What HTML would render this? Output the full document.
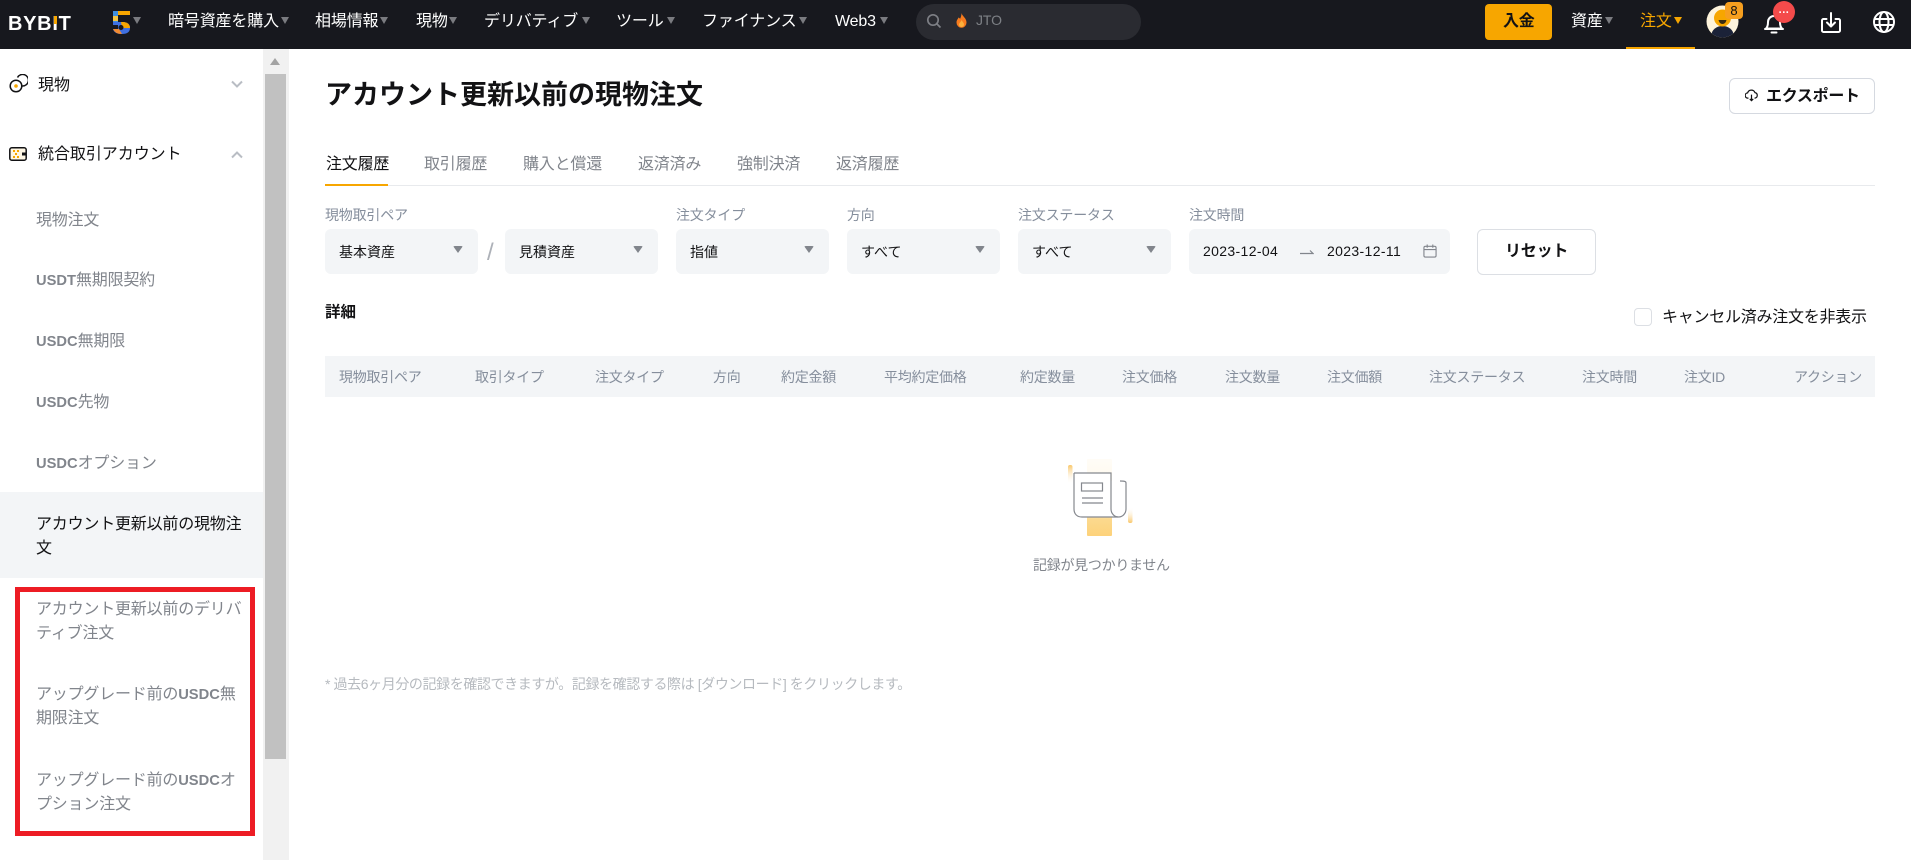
<!DOCTYPE html>
<html lang="ja"><head><meta charset="utf-8"><title>現物注文</title>
<style>
html,body{margin:0;padding:0;background:#fff}
body{width:1911px;height:860px;position:relative;overflow:hidden;font-family:"Liberation Sans","Noto Sans CJK JP",sans-serif;font-size:14px;color:#121214}
.a,.t{position:absolute}
.t{white-space:nowrap;line-height:24px}
#hd{position:absolute;left:0;top:0;width:1911px;height:49px;background:#17181e}
.n{color:#fff;font-size:16px;top:10px;letter-spacing:-.15px}
.c{position:absolute;width:0;height:0;border-left:4.5px solid transparent;border-right:4.5px solid transparent;border-top:7px solid #7a7b80;top:17px}
.s{color:#81858c;font-size:16px;left:36px;width:212px;white-space:normal;letter-spacing:-.2px}
.u{font-weight:700;font-size:14.7px;letter-spacing:0}
.l{color:#858e9c;font-size:14px;top:203px;letter-spacing:-.2px}
.f{position:absolute;top:229px;height:45px;background:#f3f5f7;border-radius:6px}
.v{font-size:14px;top:240px;color:#121214}
.d{position:absolute;top:246px;width:0;height:0;border-left:5px solid transparent;border-right:5px solid transparent;border-top:7px solid #81858c;border-radius:2px}
.h{color:#858e9c;font-size:14px;top:365px;letter-spacing:-.25px}
.b{font-weight:700}
</style></head><body>
<div id="hd"></div>

<div class="t" style="left:8px;top:12px;color:#fff;font-size:20px;font-weight:700;letter-spacing:.7px">BYB<span style="position:relative">I<span class="a" style="left:1.500px;top:3px;width:3px;height:8px;background:#f7a600"></span></span>T</div>

<svg class="a" style="left:113px;top:11px" width="18" height="23" viewBox="0 0 18 23">
<rect x="0" y="0" width="5" height="12" fill="#3f8fe0"/><rect x="5" y="0" width="12" height="4" fill="#f7a600"/><rect x="0" y="5" width="5" height="5" fill="#f4c542"/>
<rect x="5" y="4" width="4" height="4" fill="#17181e"/>
<path d="M0 11 H11 Q17 12 17 17 Q17 23 9 23 Q1 23 0 18 H5 V14 H0Z" fill="#3f6fe0"/>
<path d="M8 11 H11 Q17 12 17 17 H9Z" fill="#f7a600"/><path d="M0 18 H6 L9 23 Q2 23 0 18Z" fill="#f28a30"/><circle cx="8" cy="16.500" r="2.500" fill="#17181e"/>
</svg>
<div class="c" style="left:133px"></div>
<div class="t n" style="left:168px">暗号資産を購入</div><div class="c" style="left:281px"></div>
<div class="t n" style="left:315px">相場情報</div><div class="c" style="left:380px"></div>
<div class="t n" style="left:416px">現物</div><div class="c" style="left:449px"></div>
<div class="t n" style="left:484px">デリバティブ</div><div class="c" style="left:582px"></div>
<div class="t n" style="left:616px">ツール</div><div class="c" style="left:667px"></div>
<div class="t n" style="left:702px">ファイナンス</div><div class="c" style="left:799px"></div>
<div class="t n" style="left:835px">Web3</div><div class="c" style="left:880px"></div>

<div class="a" style="left:916px;top:4px;width:225px;height:36px;border-radius:18px;background:#2a2b31"></div>
<svg class="a" style="left:926px;top:13px" width="16" height="16" viewBox="0 0 16 16" fill="none" stroke="#7d7f85" stroke-width="1.700"><circle cx="7" cy="7" r="5.200"/><path d="M11 11l3.500 3.500"/></svg>
<svg class="a" style="left:956px;top:13px" width="11" height="15" viewBox="0 0 11 15"><path d="M5.500 0C6 3 10.500 5 10.500 9.500A5 5.300 0 0 1 .5 9.500C.5 7 2 6 2.500 4.500 3.500 5 4 5.500 4 6 5 4 5.500 2 5.500 0Z" fill="#f77b1e"/><path d="M5.500 7c.5 1.500 2.500 2.500 2.500 4.500a2.500 2.500 0 0 1-5 0C3 10 5 9 5.500 7Z" fill="#fbb13c"/></svg>
<div class="t" style="left:976px;top:8px;color:#7d8085;font-size:14px;letter-spacing:-.1px">JTO</div>

<div class="a" style="left:1485px;top:4px;width:67px;height:36px;background:#f7a600;border-radius:4px"></div>
<div class="t b" style="left:1503px;top:10px;font-size:16px;color:#121214;letter-spacing:-.2px">入金</div>
<div class="t n" style="left:1571px">資産</div><div class="c" style="left:1605px"></div>
<div class="t n" style="left:1640px;color:#f7a600">注文</div><div class="c" style="left:1674px;border-top-color:#f7a600"></div>
<div class="a" style="left:1626px;top:47px;width:69px;height:2px;background:#f7a600"></div>

<svg class="a" style="left:1706px;top:5px" width="33" height="33" viewBox="0 0 33 33"><defs><clipPath id="av"><circle cx="16.500" cy="16.500" r="16"/></clipPath></defs><circle cx="16.500" cy="16.500" r="16" fill="#fdf3dc"/><g clip-path="url(#av)"><ellipse cx="16.500" cy="30" rx="11" ry="9" fill="#1b2238"/><circle cx="16.500" cy="13" r="8.500" fill="#f7a600"/><path d="M12.500 15h8q-1 4-4 4t-4-4Z" fill="#3a2c12"/></g></svg>
<div class="a" style="left:1725px;top:2px;width:18px;height:17px;background:#f79f1f;border-radius:4px;color:#121214;font-size:13px;line-height:17px;text-align:center">8</div>

<svg class="a" style="left:1762px;top:12px" width="24" height="23" viewBox="0 0 24 23" fill="none" stroke="#fff" stroke-width="2"><path d="M4 16.500c1.500-1.500 2-3 2-6.500a6 6 0 0 1 12 0c0 3.500.5 5 2 6.500z" stroke-linejoin="round"/><path d="M3 17h18M9.500 20.500h5" stroke-linecap="round"/></svg>
<div class="a" style="left:1773px;top:1px;width:22px;height:22px;border-radius:50%;background:#f44b4b;color:#fff;font-size:11px;line-height:18px;text-align:center;font-weight:700;letter-spacing:.5px">...</div>

<svg class="a" style="left:1820px;top:11px" width="22" height="23" viewBox="0 0 22 23" fill="none" stroke="#fff" stroke-width="2" stroke-linecap="round" stroke-linejoin="round"><path d="M6.500 8H3.500a1.500 1.500 0 0 0-1.500 1.500v10A1.500 1.500 0 0 0 3.500 21h15a1.500 1.500 0 0 0 1.500-1.500v-10A1.500 1.500 0 0 0 18.500 8h-3"/><path d="M11 2v13M7 11.500l4 4 4-4"/></svg>
<svg class="a" style="left:1872px;top:10px" width="24" height="24" viewBox="0 0 24 24" fill="none" stroke="#fff" stroke-width="2"><circle cx="12" cy="12" r="10"/><ellipse cx="12" cy="12" rx="4.500" ry="10"/><path d="M2.500 9h19M2.500 15h19"/></svg>

<!-- sidebar -->
<svg class="a" style="left:9px;top:74px" width="19" height="19" viewBox="0 0 19 19" fill="none" stroke="#121214" stroke-width="1.500"><circle cx="7" cy="12" r="5.800"/><path d="M8.500 3.500a5.800 5.800 0 1 1 5 8.500" /><circle cx="7" cy="12" r="1.800" fill="#f7a600" stroke="none"/></svg>
<div class="t" style="left:38px;top:74px;font-size:16px">現物</div>
<svg class="a" style="left:231px;top:80px" width="12" height="8" viewBox="0 0 12 8" fill="none" stroke="#b9bdc4" stroke-width="2"><path d="M1 1.500l5 5 5-5"/></svg>
<svg class="a" style="left:9px;top:147px" width="18" height="14" viewBox="0 0 18 14"><rect x=".8" y=".8" width="16.400" height="12.400" rx="2" fill="#fff7e4" stroke="#121214" stroke-width="1.500"/><rect x="13" y="5.500" width="4" height="3" fill="#121214"/><rect x="4" y="3" width="2" height="2" fill="#f7a600"/><rect x="8" y="3" width="2" height="2" fill="#f7a600"/><rect x="6" y="6" width="2" height="2" fill="#f7a600"/><rect x="4" y="9" width="2" height="2" fill="#f7a600"/><rect x="8" y="9" width="2" height="2" fill="#f7a600"/></svg>
<div class="t" style="left:38px;top:143px;font-size:16px;letter-spacing:-.05px">統合取引アカウント</div>
<svg class="a" style="left:231px;top:151px" width="12" height="8" viewBox="0 0 12 8" fill="none" stroke="#b9bdc4" stroke-width="2"><path d="M1 6.500l5-5 5 5"/></svg>

<div class="t s" style="top:209px">現物注文</div>
<div class="t s" style="top:269px"><span class="u">USDT</span>無期限契約</div>
<div class="t s" style="top:330px"><span class="u">USDC</span>無期限</div>
<div class="t s" style="top:391px"><span class="u">USDC</span>先物</div>
<div class="t s" style="top:452px"><span class="u">USDC</span>オプション</div>
<div class="a" style="left:0;top:492px;width:263px;height:86px;background:#f3f5f7"></div>
<div class="t s" style="top:513px;color:#121214">アカウント更新以前の現物注<br>文</div>
<div class="t s" style="top:598px">アカウント更新以前のデリバ<br>ティブ注文</div>
<div class="t s" style="top:683px">アップグレード前の<span class="u">USDC</span>無<br>期限注文</div>
<div class="t s" style="top:769px">アップグレード前の<span class="u">USDC</span>オ<br>プション注文</div>
<div class="a" style="left:15px;top:587px;width:230px;height:239px;border:5px solid #ed1c24"></div>

<!-- scrollbar -->
<div class="a" style="left:263px;top:49px;width:26px;height:811px;background:#f1f1f1"></div>
<div class="a" style="left:265px;top:74px;width:21px;height:685px;background:#c1c1c1"></div>
<div class="a" style="left:270px;top:58px;width:0;height:0;border-left:5.500px solid transparent;border-right:5.500px solid transparent;border-bottom:7px solid #a3a3a3"></div>

<!-- main -->
<div class="t b" style="left:325px;top:75px;font-size:27px;line-height:40px">アカウント更新以前の現物注文</div>
<div class="a" style="left:1729px;top:78px;width:144px;height:34px;border:1px solid #d5d9e0;border-radius:6px"></div>
<svg class="a" style="left:1745px;top:89px" width="13" height="13" viewBox="0 0 15 15" fill="none" stroke="#121214" stroke-width="1.400"><path d="M4 10.500H3.500a3 3 0 0 1-.5-6A4.500 4.500 0 0 1 11.500 4.200a3.200 3.200 0 0 1 0 6.300H11"/><path d="M7.500 6.500v7M5.500 11.500l2 2 2-2"/></svg>
<div class="t b" style="left:1766px;top:85px;font-size:16px;letter-spacing:-.3px">エクスポート</div>

<div class="t" style="left:326px;top:153px;font-size:16px;letter-spacing:-.2px">注文履歴</div>
<div class="t" style="left:424px;top:153px;font-size:16px;color:#81858c;letter-spacing:-.2px">取引履歴</div>
<div class="t" style="left:523px;top:153px;font-size:16px;color:#81858c;letter-spacing:-.2px">購入と償還</div>
<div class="t" style="left:638px;top:153px;font-size:16px;color:#81858c;letter-spacing:-.2px">返済済み</div>
<div class="t" style="left:737px;top:153px;font-size:16px;color:#81858c;letter-spacing:-.2px">強制決済</div>
<div class="t" style="left:836px;top:153px;font-size:16px;color:#81858c;letter-spacing:-.2px">返済履歴</div>
<div class="a" style="left:325px;top:185px;width:1550px;height:1px;background:#e8eaed"></div>
<div class="a" style="left:325px;top:184px;width:63px;height:2px;background:#f7a600"></div>

<div class="t l" style="left:325px">現物取引ペア</div>
<div class="t l" style="left:676px">注文タイプ</div>
<div class="t l" style="left:847px">方向</div>
<div class="t l" style="left:1018px">注文ステータス</div>
<div class="t l" style="left:1189px">注文時間</div>

<div class="f" style="left:325px;width:153px"></div><div class="t v" style="left:339px">基本資産</div><div class="d" style="left:453px"></div>
<div class="t" style="left:487px;top:241px;font-size:24px;color:#adb1b8;font-weight:300">/</div>
<div class="f" style="left:505px;width:153px"></div><div class="t v" style="left:519px">見積資産</div><div class="d" style="left:633px"></div>
<div class="f" style="left:676px;width:153px"></div><div class="t v" style="left:690px">指値</div><div class="d" style="left:804px"></div>
<div class="f" style="left:847px;width:153px"></div><div class="t v" style="left:861px">すべて</div><div class="d" style="left:975px"></div>
<div class="f" style="left:1018px;width:153px"></div><div class="t v" style="left:1032px">すべて</div><div class="d" style="left:1146px"></div>
<div class="f" style="left:1189px;width:261px"></div>
<div class="t v" style="left:1203px;top:239px;letter-spacing:.35px">2023-12-04</div>
<svg class="a" style="left:1300px;top:247px" width="14" height="8" viewBox="0 0 14 8" fill="none" stroke="#81858c" stroke-width="1.200"><path d="M0 6.500h13l-3-3"/></svg>
<div class="t v" style="left:1327px;top:239px;letter-spacing:.35px">2023-12-11</div>
<svg class="a" style="left:1423px;top:244px" width="14" height="14" viewBox="0 0 15 15" fill="none" stroke="#81858c" stroke-width="1.200"><rect x="1" y="2.500" width="13" height="11.500" rx="1.500"/><path d="M1 6h13M4.500 .5v3.500M10.500 .5v3.500"/></svg>
<div class="a" style="left:1477px;top:229px;width:117px;height:44px;border:1px solid #dcdfe4;border-radius:6px"></div>
<div class="t b" style="left:1505px;top:240px;font-size:16px;letter-spacing:-.2px">リセット</div>

<div class="t b" style="left:325px;top:301px;font-size:15.500px">詳細</div>
<div class="a" style="left:1634px;top:308px;width:16px;height:16px;border:1px solid #dcdfe4;border-radius:4px"></div>
<div class="t" style="left:1662px;top:306px;font-size:16px;letter-spacing:-.25px">キャンセル済み注文を非表示</div>

<div class="a" style="left:325px;top:356px;width:1550px;height:41px;background:#f3f5f7"></div>
<div class="t h" style="left:339px">現物取引ペア</div>
<div class="t h" style="left:475px">取引タイプ</div>
<div class="t h" style="left:595px">注文タイプ</div>
<div class="t h" style="left:713px">方向</div>
<div class="t h" style="left:781px">約定金額</div>
<div class="t h" style="left:884px">平均約定価格</div>
<div class="t h" style="left:1020px">約定数量</div>
<div class="t h" style="left:1122px">注文価格</div>
<div class="t h" style="left:1225px">注文数量</div>
<div class="t h" style="left:1327px">注文価額</div>
<div class="t h" style="left:1429px">注文ステータス</div>
<div class="t h" style="left:1582px">注文時間</div>
<div class="t h" style="left:1684px">注文ID</div>
<div class="t h" style="left:1794px">アクション</div>

<svg class="a" style="left:1060px;top:455px" width="80" height="85" viewBox="0 0 80 85" fill="none">
<defs>
<linearGradient id="g1" x1="0" y1="0" x2="0" y2="1"><stop offset="0" stop-color="#fff8ea" stop-opacity=".4"/><stop offset=".7" stop-color="#fff3d8"/><stop offset=".78" stop-color="#fcd98e"/><stop offset="1" stop-color="#fdd27a"/></linearGradient>
<linearGradient id="g2" x1="0" y1="0" x2="0" y2="1"><stop offset="0" stop-color="#f9c76a"/><stop offset="1" stop-color="#fff" stop-opacity="0"/></linearGradient>
<linearGradient id="g3" x1="0" y1="1" x2="0" y2="0"><stop offset="0" stop-color="#f9c76a"/><stop offset="1" stop-color="#fff" stop-opacity="0"/></linearGradient>
</defs>
<rect x="27" y="4" width="25" height="77" rx="1" fill="url(#g1)"/>
<rect x="8" y="10" width="4.500" height="19" rx="2" fill="url(#g2)"/>
<rect x="68" y="52" width="4.500" height="16" rx="2" fill="url(#g3)"/>
<path d="M14 18H51V26H63C65 26 66 26.500 66 28V54A7.500 8 0 0 1 58.500 62H22C17 62 14 59 14 54Z" fill="#fff"/>
<path d="M14 18H51V54A7.500 8 0 0 0 66 54V28C66 26.500 65 26 60 26" stroke="#85888e" stroke-width="1.200"/>
<path d="M14 18V54C14 59 17 62 22 62H58" stroke="#85888e" stroke-width="1.200"/>
<rect x="21.500" y="28" width="21" height="8" stroke="#85888e" stroke-width="1.200"/>
<path d="M22 43H43M22 48H43" stroke="#85888e" stroke-width="1.200"/>
</svg>
<div class="t" style="left:1033px;top:553px;font-size:14px;color:#81858c;letter-spacing:-.28px">記録が見つかりません</div>

<div class="t" style="left:325px;top:672px;font-size:14px;color:#b6babf;letter-spacing:-.4px">* 過去6ヶ月分の記録を確認できますが。記録を確認する際は [ダウンロード] をクリックします。</div>
</body></html>
